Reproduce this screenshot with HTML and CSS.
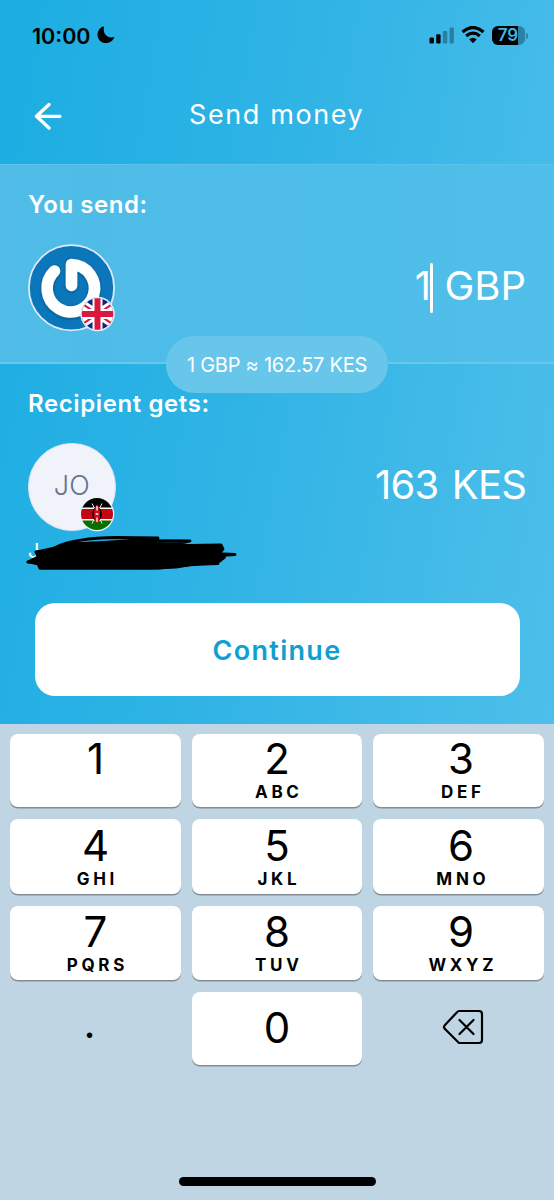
FILE: index.html
```html
<!DOCTYPE html>
<html lang="en">
<head>
<meta charset="utf-8">
<meta name="viewport" content="width=device-width">
<title>Send money</title>
<link rel="stylesheet" href="styles.css">
</head>
<body>
<main class="screen">
  <div class="status">
    <span class="time">10:00</span>
    <svg class="moon" width="18" height="18" viewBox="0 0 18 18"><path d="M5.600.5C.8 2.800-.8 8.600 1.600 12.900c2.900 5.200 11.900 6.200 15.500-.9.300-.7-.2-1.100-.9-.9C10.600 12.600 5.600 8.200 7 1.300 7.100.6 6.300.2 5.600.5z"/></svg>
    <svg class="signal" width="26" height="17" viewBox="0 0 26 17"><rect x=".5" y="10.500" width="4.400" height="6" rx="1.200"/><rect x="7.200" y="7.300" width="4.400" height="9.200" rx="1.200"/><g opacity=".3"><rect x="13.900" y="4" width="4.400" height="12.500" rx="1.200"/><rect x="20.500" y=".5" width="4.400" height="16" rx="1.200"/></g></svg>
    <svg class="wifi" width="24" height="18" viewBox="0 0 24 18"><g fill="none" stroke="#000" stroke-width="3.300"><path d="M1.500 6.100Q12-3.100 22.500 6.100"/><path d="M5.200 10.100Q12 4.200 18.800 10.100"/></g><path d="M8.200 13.300Q12 10.200 15.800 13.300L12 17.200z"/></svg>
    <div class="battery"><span>79</span></div>
    <i class="battery-cap"></i>
  </div>

  <header class="header">
    <svg class="back" width="28" height="28" viewBox="0 0 28 28" fill="none" stroke="#fff" stroke-width="3.300" stroke-linecap="round" stroke-linejoin="round"><path d="M26 14.300H2.500M15 2.500L2.500 14.300L15 26"/></svg>
    <h1>Send money</h1>
  </header>

  <section class="panel send">
    <h2 class="send-label">You send:</h2>
    <div class="row">
      <div class="avatar">
        <svg width="88" height="88" viewBox="0 0 88 88">
          <defs>
            <clipPath id="flagClip"><circle cx="69.500" cy="70" r="15.700"/></clipPath>
            <filter id="soft" x="-20%" y="-20%" width="140%" height="140%"><feDropShadow dx="0" dy="1" stdDeviation="1.400" flood-opacity=".35"/></filter>
          </defs>
          <circle cx="43.500" cy="43.700" r="42.600" fill="#0b76ba" stroke="#dfe8f6" stroke-width="1.800"/>
          <path d="M26.500 27A23.700 23.700 0 1 0 43.500 20.500V41.500" fill="none" stroke="#fff" stroke-width="11.600" stroke-linecap="round" stroke-linejoin="round" filter="url(#soft)"/>
          <circle cx="69.500" cy="70" r="17.300" fill="#e9ecf7"/>
          <g clip-path="url(#flagClip)">
            <path fill="#0d2483" d="M53 54h33v33H53z"/>
            <path d="M45.500 54l48 32M93.500 54l-48 32" stroke="#fff" stroke-width="8"/>
            <path d="M45.500 54l48 32M93.500 54l-48 32" stroke="#d8183c" stroke-width="2"/>
            <path d="M69.500 54v33M53 70h34" stroke="#fff" stroke-width="10"/>
            <path d="M69.500 54v33M53 70h34" stroke="#d8183c" stroke-width="6"/>
          </g>
        </svg>
      </div>
      <div class="amount gbp"><span class="digits">1</span><i class="cursor"></i><span>GBP</span></div>
    </div>
    <div class="rate">1 GBP ≈ 162.57 KES</div>
  </section>

  <section class="panel receive">
    <h2 class="receive-label">Recipient gets:</h2>
    <div class="row">
      <div class="avatar initials">
        <span>JO</span>
        <svg class="flag" width="36" height="36" viewBox="0 0 36 36">
          <defs><clipPath id="kenyaClip"><circle cx="18" cy="18" r="16"/></clipPath></defs>
          <circle cx="18" cy="18" r="17.300" fill="#f1f3fa"/>
          <g clip-path="url(#kenyaClip)">
            <path d="M0 0h36v12H0z"/><path fill="#fff" d="M0 11.500h36v13H0z"/><path fill="#c40612" d="M0 13h36v10H0z"/><path fill="#087000" d="M0 24.500h36V36H0z"/>
            <path d="M13 7.500l10 20M23 7.500l-10 20" stroke="#fff" stroke-width=".9"/>
            <ellipse cx="18" cy="18" rx="4.800" ry="7"/>
            <ellipse cx="18" cy="18" rx="3" ry="9" fill="#d40a18"/>
            <path d="M18 10v4.500M18 21.500V26M16.700 18h2.600" stroke="#fff" stroke-width="1.300"/>
          </g>
        </svg>
      </div>
      <div class="amount kes">163 KES</div>
    </div>
    <div class="name">
      <span>J</span>
      <svg class="scribble" width="214" height="38" viewBox="24 534 214 38" fill="none" stroke="#000" stroke-width="2.800" stroke-linecap="round" stroke-linejoin="round">
        <path fill="#000" d="M36 552L54 548 70 545 110 543 145 543 188 545.500 221 545 223 549 218 555 224 557 220 561 200 563 176 567 150 568 40 568 38 564 28 562 38 557z"/>
        <path d="M56 547Q76 538 116 537.500L158 538Q140 541 70 544M105 543Q140 540 190 541Q182 544 160 544M160 541L130 542M170 551Q215 554 235 554.500Q210 556 190 556M225 556Q224 562 200 561.500L218 563.500Q190 564 160 568H40M28 562Q60 557 100 556M36 552Q60 550 90 548"/>
      </svg>
    </div>
  </section>

  <button class="continue">Continue</button>

  <section class="keypad">
    <div class="keys">
      <div class="key"><b>1</b><small></small></div>
      <div class="key"><b>2</b><small>ABC</small></div>
      <div class="key"><b>3</b><small>DEF</small></div>
      <div class="key"><b>4</b><small>GHI</small></div>
      <div class="key"><b>5</b><small>JKL</small></div>
      <div class="key"><b>6</b><small>MNO</small></div>
      <div class="key"><b>7</b><small>PQRS</small></div>
      <div class="key"><b>8</b><small>TUV</small></div>
      <div class="key"><b>9</b><small>WXYZ</small></div>
      <div class="plain dot">.</div>
      <div class="key zero"><b>0</b></div>
      <div class="plain"><svg class="delete" width="42" height="36" viewBox="0 0 42 36" fill="none" stroke="#000" stroke-width="2.200" stroke-linecap="round" stroke-linejoin="round"><path d="M17 2H37Q40 2 40 5V31Q40 34 37 34H17L3 20Q1 18 3 16L15 3.200Q16 2 17 2zM17.500 11L31.500 25M31.500 11L17.500 25"/></svg></div>
    </div>
    <div class="home"></div>
  </section>
</main>
</body>
</html>
```

FILE: styles.css
```css
* { box-sizing: border-box; }
body { margin: 0; font-family: Inter, "Liberation Sans", sans-serif; color: #fff; }
h1, h2 { margin: 0; font-weight: 500; white-space: nowrap; }
.screen {
  width: 554px; height: 1200px; overflow: hidden;
  display: flex; flex-direction: column;
  background: linear-gradient(100deg, #1cade2 0%, #2eb3e5 43%, #42bae8 78%, #4dbfea 100%) 0 0 / 554px 724px no-repeat;
}

.status { height: 72px; padding-left: 32px; display: flex; align-items: center; color: #000; flex: none; }
.time { width: 59px; font-size: 21.5px; font-weight: 600; line-height: 71px; }
.moon { margin: -2px 313.5px 0 6px; flex: none; }
.signal, .wifi { flex: none; margin-top: -2px; }
.signal { margin-right: 6px; }
.wifi { margin-right: 7px; }
.battery {
  width: 33px; height: 18.500px; border-radius: 6px; margin-top: -1px; flex: none;
  background: linear-gradient(90deg, #000 80%, #2b82a5 80%);
  color: #41b6e3; font-size: 17px; font-weight: 600; line-height: 19px; text-align: center;
}
.battery-cap { width: 2px; height: 6px; margin: -1px 0 0 1px; border-radius: 0 3px 3px 0; background: #2f86aa; }

.header { height: 92px; padding-left: 34px; display: flex; align-items: flex-start; flex: none; }
.back { margin-top: 30px; flex: none; }
h1 { margin: 26px 0 0 127px; font-size: 27px; line-height: 33px; font-weight: 430; letter-spacing: 1.6px; }

.panel { flex: none; padding: 0 28px; }
.send { height: 200px; background: linear-gradient(90deg, #50bce7, #4dbde9 60%, #50bfea); border-top: 1px solid #5bc2ea; border-bottom: 2px solid #68c8ec; position: relative; }
h2 { font-size: 24px; line-height: 30px; font-weight: 600; }
.send-label { padding-top: 25px; letter-spacing: .55px; }
.receive { height: 238.500px; }
.receive-label { padding-top: 25px; letter-spacing: .6px; }
.row { display: flex; justify-content: space-between; align-items: center; height: 88px; margin-top: 24px; }
.avatar { width: 88px; height: 88px; flex: none; }
.avatar svg { display: block; }
.initials { width: 87.500px; height: 87.500px; border-radius: 50%; border: 1.500px solid #dfe6f3; background: #f1f3fa; color: #68718a; font-size: 27px; font-weight: 300; line-height: 84px; text-align: center; position: relative; }
.avatar .flag { position: absolute; left: 50px; top: 51.500px; }
.amount { display: flex; align-items: center; font-size: 40px; line-height: 50px; white-space: pre; margin-top: -4px; }
.kes { letter-spacing: -.8px; word-spacing: 3px; }
.digits { margin-right: -1px; }
.cursor { width: 3.500px; height: 50px; border-radius: 2px; background: #fff; margin: 4px 11px 0 0; }
.rate { position: absolute; left: 166px; top: 170.500px; width: 222px; height: 57px; border-radius: 29px; background: #68c6eb; font-size: 20px; line-height: 59px; letter-spacing: -.25px; text-align: center; white-space: nowrap; }
.name { position: relative; height: 34px; padding-top: 6px; font-size: 20px; line-height: 28px; }
.scribble { position: absolute; left: -4px; top: 3px; }

.continue { flex: none; width: 485px; height: 93.500px; margin: 0 auto; padding: 0; border: 0; border-radius: 20px; background: #fff; color: #109fd2; font: 600 27px/95px Inter, sans-serif; letter-spacing: 1.300px; }

.keypad { flex: none; height: 476px; margin-top: 28px; padding: 10px 10px 0; background: #bfd5e3; color: #000; }
.keys { display: grid; grid-template-columns: 171px 170px 171px; grid-template-rows: 73px 74.500px 74.500px 73px; column-gap: 11px; row-gap: 12px; }
.key { display: flex; flex-direction: column; justify-content: flex-end; align-items: center; padding-bottom: 4px; border-radius: 8px; background: #fff; box-shadow: 0 1.500px 0 #848d93; }
.key:nth-child(3n) { padding-left: 5px; }
.key b { font-size: 42px; line-height: 47px; font-weight: 400; }
.key small { height: 21px; font-size: 17px; line-height: 21px; font-weight: 650; letter-spacing: 3.700px; margin-right: -3.700px; }
.zero { justify-content: center; padding: 0 0 2px; }
.plain { display: flex; align-items: center; justify-content: center; }
.dot { font: 700 36px/40px Lato, sans-serif; padding: 0 12px 10px 0; }
.delete { margin: -4px 0 0 8px; }
.home { width: 197px; height: 9px; margin: 112px auto 0; border-radius: 5px; background: #000; }
```
